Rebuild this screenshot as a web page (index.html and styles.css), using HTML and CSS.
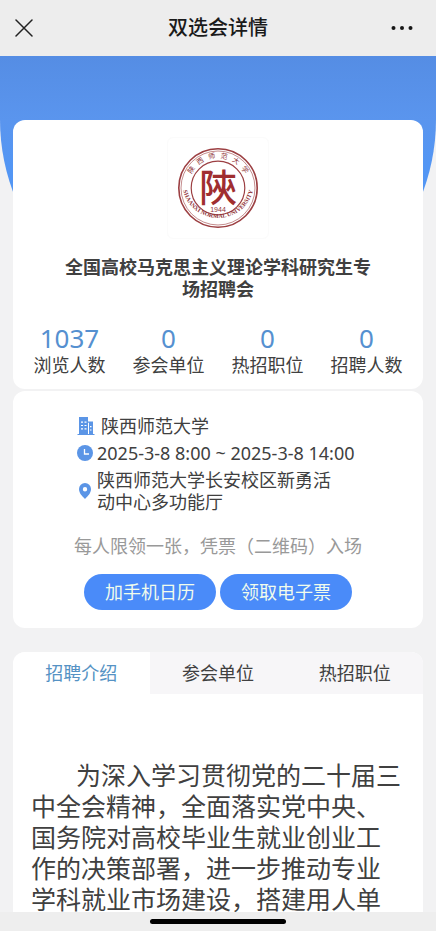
FILE: index.html
```html
<!DOCTYPE html>
<html lang="zh-CN">
<head>
    <meta charset="UTF-8">
    <meta name="viewport" content="width=device-width, initial-scale=1.0">
    <title>双选会详情</title>
    <link rel="stylesheet" href="styles.css">
</head>
<body>
    <header class="navbar">
        <button class="nav-button" aria-label="关闭">
            <svg width="18" height="18" viewBox="0 0 18 18" fill="none" stroke="#222" stroke-width="1.5" stroke-linecap="round"><path d="M1 1l16 16M17 1L1 17"/></svg>
        </button>
        <h1>双选会详情</h1>
        <button class="nav-button nav-more" aria-label="更多">
            <svg width="22" height="6" viewBox="0 0 22 6" fill="#161616"><circle cx="2.5" cy="3" r="2"/><circle cx="11" cy="3" r="2"/><circle cx="19.5" cy="3" r="2"/></svg>
        </button>
    </header>

    <main class="page">
        <section class="card summary">
            <div class="logo">
                <svg width="82" height="82" viewBox="0 0 82 82">
                    <defs>
                        <path id="ring-top" d="M11 41a30 30 0 0 1 60 0"/>
                        <path id="ring-bottom" d="M5 35a36 36 0 1 0 72 0"/>
                    </defs>
                    <g fill="none" stroke="#9c3f42">
                        <circle cx="41" cy="41" r="39.2" stroke-width="1.6"/>
                        <circle cx="41" cy="41" r="37" stroke-width=".6"/>
                        <circle cx="41" cy="41" r="26.8" stroke-width="1.2"/>
                    </g>
                    <g fill="#8f3438" text-anchor="middle">
                        <text class="seal-name"><textPath href="#ring-top" startOffset="50%">陕&#8196;&#8196;西&#8196;&#8196;师&#8196;&#8196;范&#8196;&#8196;大&#8196;&#8196;学</textPath></text>
                        <text class="seal-latin"><textPath href="#ring-bottom" startOffset="50%">SHAANXI NORMAL UNIVERSITY</textPath></text>
                        <text class="seal-char" x="41" y="54">陝</text>
                        <text class="seal-year" x="41" y="65">1944</text>
                    </g>
                </svg>
            </div>
            <h2>全国高校马克思主义理论学科研究生专场招聘会</h2>
            <ul class="stats">
                <li><strong>1037</strong><span>浏览人数</span></li>
                <li><strong>0</strong><span>参会单位</span></li>
                <li><strong>0</strong><span>热招职位</span></li>
                <li><strong>0</strong><span>招聘人数</span></li>
            </ul>
        </section>

        <section class="card details">
            <ul class="info">
                <li class="info-school">
                    <svg width="18" height="18" viewBox="0 0 18 16" preserveAspectRatio="none"><path fill="#5b95e6" d="M2 0h9v4h5v11h1.500v1H.500v-1H2z"/><path stroke="#fff" fill="none" d="M4 4.500h2m1.500 0h2M4 7.500h2m1.500 0h2M4 10.500h2m1.500 0h2M11.500 5v10M13 8.500h1.500M13 11.500h1.500"/></svg>
                    <span>陕西师范大学</span>
                </li>
                <li>
                    <svg width="16" height="16" viewBox="0 0 16 16"><circle cx="8" cy="8" r="8" fill="#5b95e6"/><path d="M7.500 4v5H12" fill="none" stroke="#fff" stroke-width="1.300"/></svg>
                    <span>2025-3-8 8:00 ~ 2025-3-8 14:00</span>
                </li>
                <li>
                    <svg width="16" height="16" viewBox="0 0 16 16"><path fill="#5b95e6" fill-rule="evenodd" d="M8 0a6 6 0 0 0-6 6c0 4 3 7 6 10 3-3 6-6 6-10a6 6 0 0 0-6-6zm0 4a2.200 2.200 0 1 1 0 4.400A2.200 2.200 0 0 1 8 4z"/></svg>
                    <span class="address">陕西师范大学长安校区新勇活动中心多功能厅</span>
                </li>
            </ul>
            <p class="note">每人限领一张，凭票（二维码）入场</p>
            <div class="actions">
                <button>加手机日历</button>
                <button>领取电子票</button>
            </div>
        </section>

        <section class="card content">
            <nav class="tabs">
                <button class="active">招聘介绍</button>
                <button>参会单位</button>
                <button>热招职位</button>
            </nav>
            <p class="intro">为深入学习贯彻党的二十届三中全会精神，全面落实党中央、国务院对高校毕业生就业创业工作的决策部署，进一步推动专业学科就业市场建设，搭建用人单</p>
        </section>
    </main>

    <footer class="home-bar"><span></span></footer>
</body>
</html>
```
FILE: styles.css
```css
* {
    box-sizing: border-box;
}
body {
    font-family: "Noto Sans", "Noto Sans CJK SC", sans-serif;
    font-size: 18px;
    line-height: 22px;
    background-color: #f2f2f3;
    color: #404040;
    margin: 0;
    display: flex;
    flex-direction: column;
    height: 100vh;
    overflow: hidden;
}
h1, h2, p, ul {
    margin: 0;
    padding: 0;
}
ul {
    list-style: none;
}
button {
    font: inherit;
    color: inherit;
    border: none;
    background: none;
    padding: 0;
    cursor: pointer;
}
svg {
    display: block;
    flex-shrink: 0;
}
.navbar {
    display: flex;
    align-items: center;
    justify-content: space-between;
    flex-shrink: 0;
    height: 56px;
    padding: 0 15px;
    background-color: #ededed;
}
.navbar h1 {
    font-size: 20px;
    font-weight: 500;
    color: #1a1a1a;
}
.nav-button {
    display: flex;
    width: 32px;
}
.nav-more {
    justify-content: flex-end;
    padding-right: 8px;
}
.page {
    position: relative;
    flex: 1;
    min-height: 0;
    padding: 64px 13px 0;
    display: flex;
    flex-direction: column;
    overflow: hidden;
}
/* Blue curved banner behind the cards */
.page::before {
    content: "";
    position: absolute;
    top: 0;
    left: 0;
    right: 0;
    height: 276px;
    background: linear-gradient(#558de4, #5a95ee 64px, #5396f4 110px);
    border-radius: 0 0 50% 50% / 0 0 77% 77%;
}
.card {
    position: relative;
    flex-shrink: 0;
    background: white;
    border-radius: 12px;
}
.summary {
    padding: 17px 7px 11px;
}
.logo {
    display: flex;
    align-items: center;
    justify-content: center;
    width: 102px;
    height: 102px;
    margin: 0 auto 17px;
    border: 1px solid #fbfbfb;
    border-radius: 6px;
}
.seal-name {
    font-family: "Noto Sans CJK SC", sans-serif;
    font-size: 7px;
}
.seal-latin {
    font-family: "Liberation Serif", serif;
    font-size: 6px;
    font-weight: bold;
}
.seal-char {
    font-family: "Noto Sans CJK TC", sans-serif;
    font-size: 38px;
    font-weight: 500;
    fill: #a02e30;
}
.seal-year {
    font-family: "Liberation Sans", sans-serif;
    font-size: 7px;
}
.summary h2 {
    font-size: 18px;
    line-height: 22px;
    text-align: center;
    padding: 0 43px;
    margin-bottom: 24px;
}
.stats {
    display: grid;
    grid-template-columns: repeat(4, 1fr);
    text-align: center;
}
.stats strong {
    display: block;
    font-size: 26px;
    font-weight: normal;
    line-height: 28px;
    color: #5590d0;
}
.stats span {
    display: block;
    line-height: 26px;
}
.details {
    margin-top: 2px;
    padding: 24px 0 18px;
}
.info {
    display: flex;
    flex-direction: column;
    gap: 5px;
    padding-left: 64px;
}
.info li {
    display: flex;
    align-items: center;
    gap: 4px;
}
.info .info-school {
    gap: 6px;
}
.address {
    max-width: 240px;
}
.note {
    margin: 22px 0 17px;
    text-align: center;
    color: #999;
}
.actions {
    display: flex;
    justify-content: center;
    gap: 4px;
}
.actions button {
    width: 132px;
    height: 36px;
    border-radius: 18px;
    background-color: #4a8bf9;
    color: #f1fcec;
}
.content {
    margin-top: 24px;
    border-radius: 12px 12px 0 0;
    overflow: hidden;
}
.tabs {
    display: grid;
    grid-template-columns: repeat(3, 1fr);
    background-color: #f7f6f8;
}
.tabs button {
    height: 42px;
}
.tabs .active {
    background: white;
    color: #5592c4;
}
.intro {
    font-size: 25px;
    line-height: 31px;
    text-indent: 45px;
    padding: 66px 18px 0;
}
.home-bar {
    display: flex;
    justify-content: center;
    align-items: center;
    flex-shrink: 0;
    height: 19px;
    background-color: #eee;
    z-index: 1;
}
.home-bar span {
    width: 136px;
    height: 5px;
    border-radius: 3px;
    background: black;
}
```
